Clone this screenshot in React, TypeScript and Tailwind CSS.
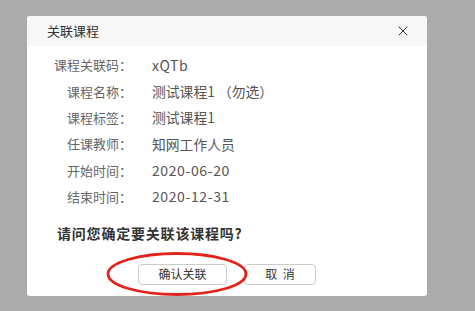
import { X } from "lucide-react";

const rows = [
  { label: "课程关联码：", value: "xQTb", latin: true },
  { label: "课程名称：", value: "测试课程1 （勿选）", latin: false },
  { label: "课程标签：", value: "测试课程1", latin: false },
  { label: "任课教师：", value: "知网工作人员", latin: false },
  { label: "开始时间：", value: "2020-06-20", latin: true },
  { label: "结束时间：", value: "2020-12-31", latin: true },
];

export default function App() {
  return (
    <div
      className="relative h-[311px] w-[475px] overflow-hidden bg-[#ababab] pt-[16px] pl-[27px]"
      style={{ fontFamily: '"Noto Sans CJK SC", "Liberation Sans", sans-serif' }}
    >
      <div className="h-[280px] w-[400px] overflow-hidden rounded-[3px] bg-white">
        <div className="flex h-[30px] items-center justify-between bg-[#f7f7f7] pr-[16px] pl-[20px]">
          <span className="text-[13px] text-[#333]">关联课程</span>
          <X size={16} strokeWidth={1.5} className="text-[#333]" />
        </div>

        <div className="pt-[6px]">
          {rows.map((r) => (
            <div key={r.label} className="flex h-[26.3px] items-center">
              <span className="w-[105px] text-right text-[13px] text-[#666]">{r.label}</span>
              <span
                className={
                  r.latin
                    ? "ml-[20px] text-[14px] tracking-[0.6px] text-[#555]"
                    : "ml-[20px] text-[13.8px] text-[#555]"
                }
              >
                {r.value}
              </span>
            </div>
          ))}
        </div>

        <div className="mt-[13px] pl-[30px] text-[14px] font-bold tracking-[0.8px] text-[#333]">
          请问您确定要关联该课程吗?
        </div>

        <div className="mt-[20px] flex gap-[17px] pl-[111px]">
          <button className="h-[21px] w-[89px] rounded-[4px] border border-[#ccc] bg-white text-[12px] text-[#333]">
            确认关联
          </button>
          <button className="h-[21px] w-[72px] rounded-[4px] border border-[#ccc] bg-white text-[12px] text-[#333]">
            取&nbsp;&nbsp;消
          </button>
        </div>
      </div>

      <svg className="pointer-events-none absolute top-[251px] left-[105px]" width="144" height="46" viewBox="0 0 144 46">
        <ellipse cx="72" cy="23" rx="69" ry="20.5" fill="none" stroke="#e2231a" strokeWidth="2.8" />
      </svg>
    </div>
  );
}
